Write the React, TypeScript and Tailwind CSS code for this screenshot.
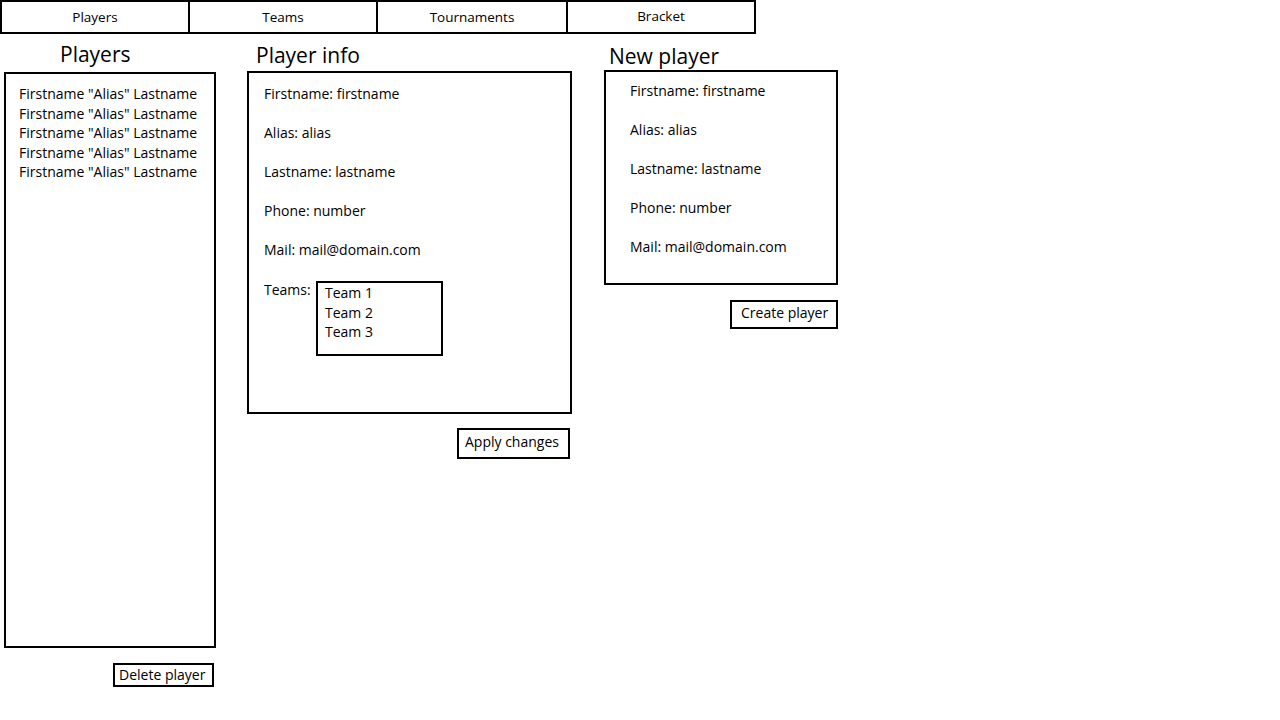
import React from "react";

const font = { fontFamily: '"Open Sans", "Noto Sans", sans-serif' };

function NavTab({ label, up, w }: { label: string; up?: boolean; w: string }) {
  return (
    <div className={`${w} h-[34px] border-2 border-black -ml-[2px] first:ml-0 flex justify-center text-[13.5px] ${up ? "items-start pt-[4px]" : "items-center pt-[1px]"}`}>
      {label}
    </div>
  );
}

function Field({ label }: { label: string }) {
  return <div className="h-[39px] leading-[20px] text-[14px]">{label}</div>;
}

export default function App() {
  const players = Array.from({ length: 5 }, () => 'Firstname "Alias" Lastname');
  return (
    <div className="w-[1280px] h-[720px] bg-white text-black relative overflow-hidden" style={font}>
      <div className="flex">
        <NavTab w="w-[190px]" label="Players" />
        <NavTab w="w-[190px]" label="Teams" />
        <NavTab w="w-[192px]" label="Tournaments" />
        <NavTab w="w-[190px]" label="Bracket" up />
      </div>

      <div className="flex items-start">
        {/* Players column */}
        <div className="ml-[4px] w-[212px] flex flex-col">
          <div className="h-[38px] pt-[6px] text-[21px] leading-[28px] pl-[56px]">Players</div>
          <div className="h-[576px] border-2 border-black pl-[13px] pt-[10px]">
            {players.map((p, i) => (
              <div key={i} className="text-[14px] leading-[19.5px]">{p}</div>
            ))}
          </div>
          <div className="flex justify-end pt-[15px] pr-[2px]">
            <div className="border-2 border-black h-[24px] w-[101px] text-[14px] leading-[20px] pl-[4px]">Delete player</div>
          </div>
        </div>

        {/* Player info column */}
        <div className="ml-[31px] w-[325px] flex flex-col">
          <div className="h-[37px] pt-[7px] text-[21px] leading-[28px] pl-[9px]">Player info</div>
          <div className="h-[343px] border-2 border-black pl-[15px] pt-[11px]">
            <Field label="Firstname: firstname" />
            <Field label="Alias: alias" />
            <Field label="Lastname: lastname" />
            <Field label="Phone: number" />
            <Field label="Mail: mail@domain.com" />
            <div className="flex items-start">
              <div className="text-[14px] leading-[20px] w-[52px] pt-[1px]">Teams:</div>
              <div className="mt-[2px] w-[127px] h-[75px] border-2 border-black pl-[7px]">
                <div className="text-[14px] leading-[19.5px]">Team 1</div>
                <div className="text-[14px] leading-[19.5px]">Team 2</div>
                <div className="text-[14px] leading-[19.5px]">Team 3</div>
              </div>
            </div>
          </div>
          <div className="flex justify-end pt-[14px] pr-[2px]">
            <div className="border-2 border-black h-[31px] w-[113px] text-[14px] leading-[24px] pl-[6px]">Apply changes</div>
          </div>
        </div>

        {/* New player column */}
        <div className="ml-[32px] w-[234px] flex flex-col">
          <div className="h-[36px] pt-[8px] text-[21px] leading-[28px] pl-[5px]">New player</div>
          <div className="h-[215px] border-2 border-black pl-[24px] pt-[9px]">
            <Field label="Firstname: firstname" />
            <Field label="Alias: alias" />
            <Field label="Lastname: lastname" />
            <Field label="Phone: number" />
            <Field label="Mail: mail@domain.com" />
          </div>
          <div className="flex justify-end pt-[15px]">
            <div className="border-2 border-black h-[29px] w-[108px] text-[14px] leading-[22px] pl-[9px]">Create player</div>
          </div>
        </div>
      </div>
    </div>
  );
}
